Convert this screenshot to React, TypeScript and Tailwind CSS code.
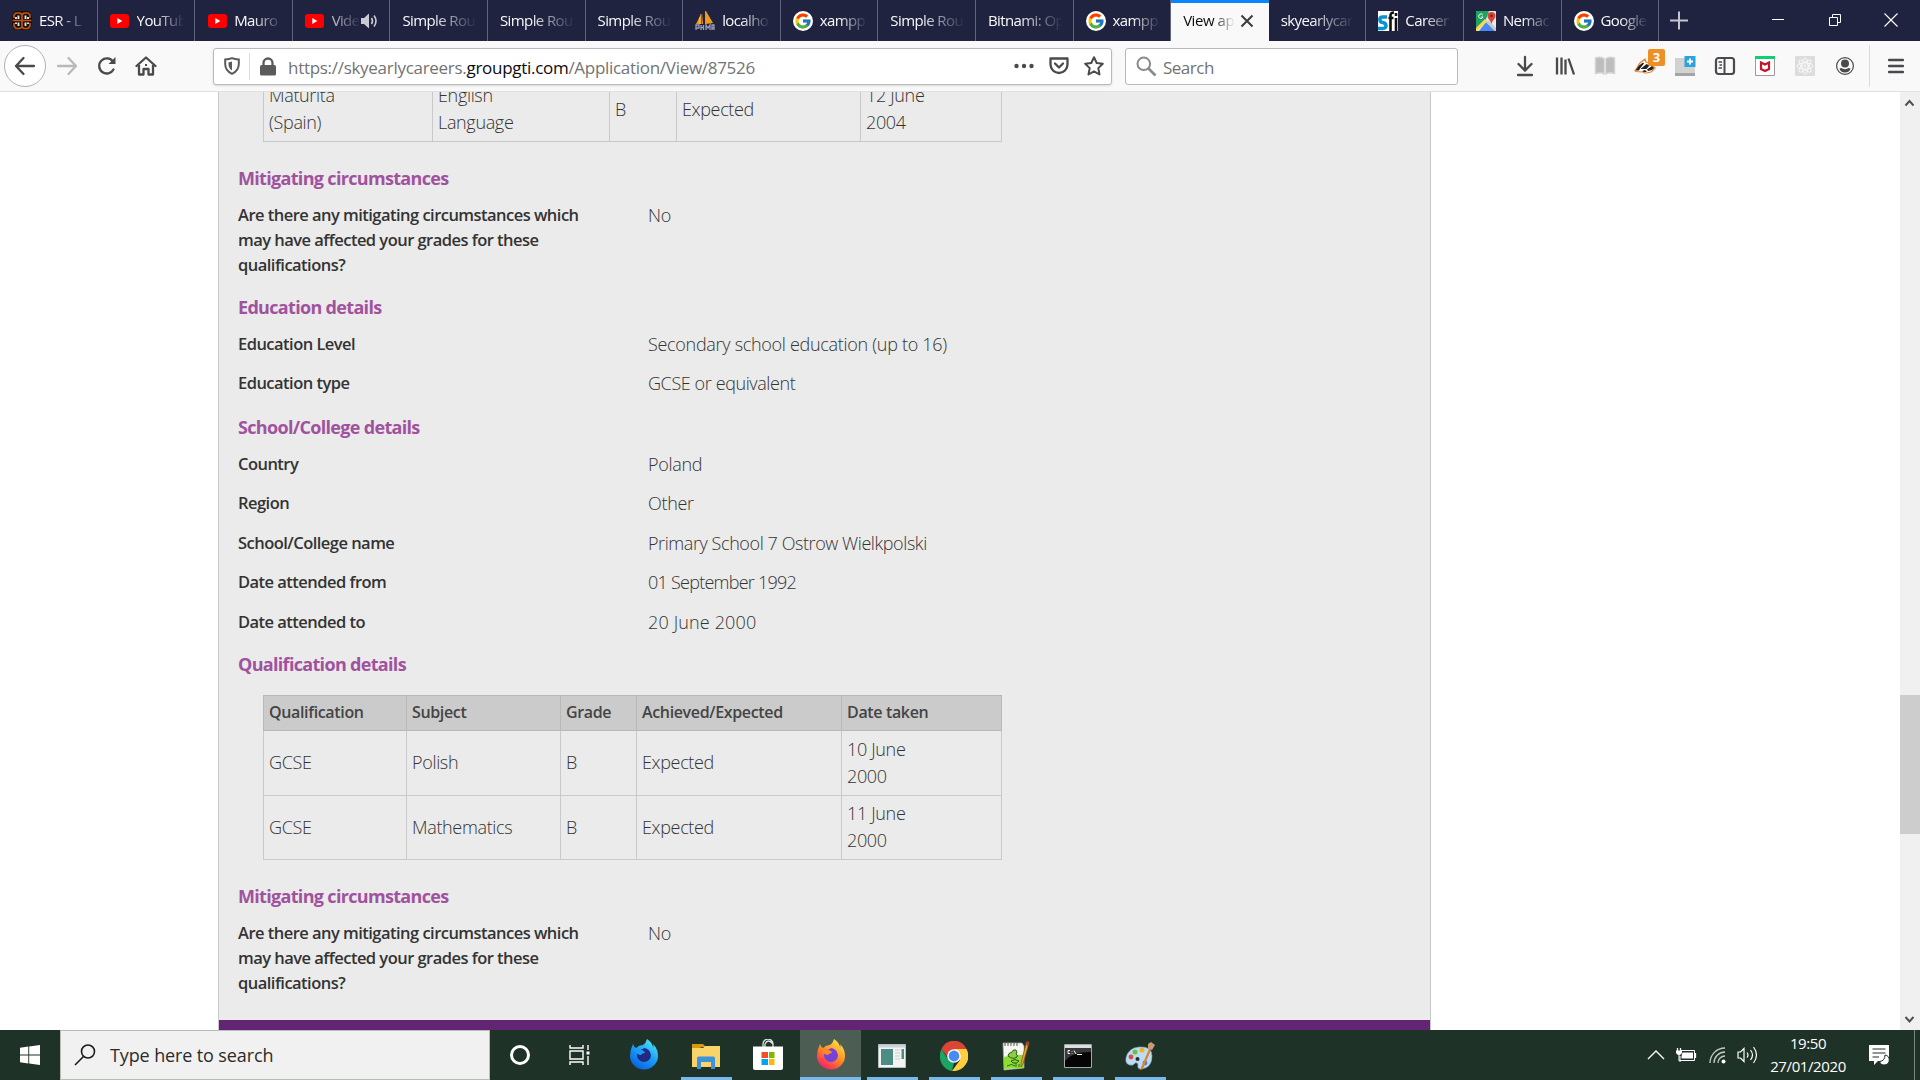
import React from 'react';
import { FcGoogle } from 'react-icons/fc';

const YouTube = () => (
  <svg width="19" height="14" viewBox="0 0 19 14" className="shrink-0">
    <rect width="19" height="14" rx="3" fill="#ff0000" />
    <path d="M7.3 4v6l5-3z" fill="#fff" />
  </svg>
);

const Google = () => (
  <span className="flex size-5 shrink-0 items-center justify-center rounded-full bg-white">
    <FcGoogle size={18} />
  </span>
);

const Esr = () => (
  <svg width="20" height="20" viewBox="0 0 20 20" className="shrink-0">
    <path d="M3 0h14l3 5v9l-3 5H3l-3-5V5z" fill="#17100c" />
    <path d="M2 7V4l2-2h4l2 1.500L12 2h4l2 2v3M2 12v3l2 2.500h4l2-1.500 2 1.500h4l2-2.500v-3M.5 9.500h19M10 3v13.500" stroke="#c4540f" strokeWidth="1.700" fill="none" />
    <path d="M4 8V6M6.500 8V4.500M13.500 8V4.500M16 8V6M4 11.500V13M6.500 11.500V15M13.500 11.500V15M16 11.500V13" stroke="#e6e2de" strokeWidth="1.900" />
  </svg>
);

const PhpMyAdmin = () => (
  <svg width="20" height="20" viewBox="0 0 20 20" className="shrink-0">
    <path d="M6 3 1 13h5zM8 2v11H7zM11 0l7 12-7 1z" fill="#f39a1e" />
    <path d="M6 3v10M10.500 0v13M4.500 6v7" stroke="#f8b75e" strokeWidth=".8" />
    <path d="M1 19v-5h3v3H1M6 14v5M8.500 14v5M6 16.500h3M11 19v-5l2 3 2-3v5M17 19v-5h2v5M17 17h2" fill="none" stroke="#9c9db3" strokeWidth="1.300" />
  </svg>
);

const Sfj = () => (
  <svg width="20" height="20" viewBox="0 0 20 20" className="shrink-0">
    <rect width="20" height="20" fill="#fff" />
    <path d="M9 6H4.500C1 6 1 11 4.500 11.500 9 12 9 17.500 5 17.500H0" fill="none" stroke="#0b93d1" strokeWidth="3.600" />
    <path d="M12.500 20V4.500q0-3 3.500-3M10.500 7h5M18 7v13M18 2v3" fill="none" stroke="#111" strokeWidth="2.600" />
  </svg>
);

const Maps = () => (
  <svg width="20" height="20" viewBox="0 0 20 20" className="shrink-0">
    <rect width="20" height="20" rx="1" fill="#e8eaed" />
    <path d="M0 0h13L9 11 0 20z" fill="#1ea362" />
    <path d="M3 20 10 11l9 9z" fill="#4a89f3" />
    <path d="M0 17 9 8l2 2L1.500 20H0z" fill="#ffd84a" />
    <path d="M12 9l8 8v3h-1l-9-9z" fill="#c5c8cc" />
    <path d="M15.500 1a4 4 0 0 1 4 4c0 3-3 4-4 8-1-4-4-5-4-8a4 4 0 0 1 4-4z" fill="#dc4437" />
    <circle cx="15.500" cy="4.800" r="1.400" fill="#7b231e" />
    <path d="M6.800 4a2.200 2.200 0 1 0 .2 2H5.200" fill="none" stroke="#fff" strokeWidth="1" />
  </svg>
);

type Tab = { label: string; icon?: React.ReactNode; kind?: 'active' | 'sound' };

const tabs: Tab[] = [
  { label: 'ESR - L', icon: <Esr /> },
  { label: 'YouTub', icon: <YouTube /> },
  { label: 'Mauro', icon: <YouTube /> },
  { label: 'Vide', icon: <YouTube />, kind: 'sound' },
  { label: 'Simple Rou' },
  { label: 'Simple Rou' },
  { label: 'Simple Rou' },
  { label: 'localho', icon: <PhpMyAdmin /> },
  { label: 'xampp', icon: <Google /> },
  { label: 'Simple Rou' },
  { label: 'Bitnami: Op' },
  { label: 'xampp', icon: <Google /> },
  { label: 'View ap', kind: 'active' },
  { label: 'skyearlycar' },
  { label: 'Career', icon: <Sfj /> },
  { label: 'Nemac', icon: <Maps /> },
  { label: 'Google', icon: <Google /> },
];

function TabItem({ tab }: { tab: Tab }) {
  if (tab.kind === 'active') {
    return (
      <div className="flex h-[41px] w-[97.6px] shrink-0 items-center border-t-[3px] border-[#0a84ff] bg-[#f9f9fa] pl-3 pr-[14px] text-[#0c0c0d]">
        <span className="mr-[5px] w-[52px] whitespace-nowrap pb-[4px] text-[15px] tracking-[-0.45px] [mask-image:linear-gradient(to_right,#000_58%,transparent_100%)]">
          {tab.label}
        </span>
        <svg width="14" height="14" viewBox="0 0 14 14" className="mb-[3px] shrink-0">
          <path d="m1.500 1.500 11 11m0-11-11 11" stroke="#3c3c3e" strokeWidth="2" />
        </svg>
      </div>
    );
  }
  return (
    <div className="flex h-[41px] w-[97.6px] shrink-0 items-center border-r border-[#62647c] pl-[12px] pr-[10px] text-[#f9f9fa]">
      {tab.icon && <span className="mr-[7px] flex w-5 shrink-0 justify-center">{tab.icon}</span>}
      <span className={tab.kind === 'sound'
        ? 'min-w-0 flex-1 whitespace-nowrap text-[15px] tracking-[-0.7px] opacity-70 [mask-image:linear-gradient(to_right,#000_10%,transparent_100%)]'
        : 'min-w-0 flex-1 whitespace-nowrap text-[15px] tracking-[-0.6px] [mask-image:linear-gradient(to_right,#000_40%,transparent_100%)]'}>
        {tab.label}
      </span>
      {tab.kind === 'sound' && (
        <svg width="18" height="16" viewBox="0 0 18 16" className="shrink-0">
          <path d="M0 5h3l5-4.500v15L3 11H0z" fill="#c9c9d2" />
          <path d="M10.500 5q2 3 0 6M13 2.500q4 5.500 0 11" fill="none" stroke="#c9c9d2" strokeWidth="1.600" />
        </svg>
      )}
    </div>
  );
}

function TabStrip() {
  return (
    <div className="flex h-[41px] items-center bg-[#202340]">
      {tabs.map((t, i) => <TabItem key={i} tab={t} />)}
      <svg width="40" height="41" viewBox="0 0 40 41" className="shrink-0">
        <path d="M20 11.500v18M11 20.500h18" stroke="#c4c5ce" strokeWidth="2" />
      </svg>
      <div className="ml-auto flex items-center">
        <svg width="57" height="41" viewBox="0 0 57 41"><path d="M23 19.500h12" stroke="#fff" /></svg>
        <svg width="57" height="41" viewBox="0 0 57 41">
          <path d="M23.500 17.500h8v8h-8zM26.500 17v-2.500h8v8H32" fill="none" stroke="#fff" />
        </svg>
        <svg width="57" height="41" viewBox="0 0 57 41"><path d="m21.500 13.500 13 13m0-13-13 13" stroke="#fff" strokeWidth="1.100" /></svg>
      </div>
    </div>
  );
}

const ToolIcon = ({ children }: { children: React.ReactNode }) => (
  <svg width="20" height="20" viewBox="0 0 20 20" fill="none" stroke="#4a4a4c" strokeWidth="2" className="shrink-0 overflow-visible">
    {children}
  </svg>
);

function NavBar() {
  return (
    <div className="flex h-[51px] items-center border-b border-[#e0e0e1] bg-[#f9f9fa]">
      <div className="ml-1 flex size-[42px] items-center justify-center rounded-full border border-[#b1b1b2] bg-white">
        <svg width="22" height="20" viewBox="0 0 22 20" fill="none" stroke="#4a4a4c" strokeWidth="2.300" strokeLinecap="round" strokeLinejoin="round">
          <path d="M20 10H2M9.500 2 2 10l7.500 8" />
        </svg>
      </div>
      <svg width="22" height="20" viewBox="0 0 22 20" fill="none" stroke="#b9b9ba" strokeWidth="2.300" strokeLinecap="round" strokeLinejoin="round" className="ml-[10px]">
        <path d="M2 10h18M12.500 2 20 10l-7.500 8" />
      </svg>
      <svg width="20" height="20" viewBox="0 0 20 20" fill="none" stroke="#4a4a4c" strokeWidth="2.300" strokeLinecap="round" className="ml-[19px]">
        <path d="M16.500 13.500A7.600 7.600 0 1 1 16 5.500" />
        <path d="M18.500 1v7h-7z" fill="#4a4a4c" stroke="none" />
      </svg>
      <svg width="22" height="20" viewBox="0 0 22 20" fill="none" stroke="#4a4a4c" strokeWidth="2.300" strokeLinecap="round" strokeLinejoin="round" className="ml-[18px]">
        <path d="M1.500 10 11 1.500l9.500 8.500M4 9v9.500h4.500V13h5v5.500H18V9" />
        <path d="M10 8h2v2h-2z" fill="#4a4a4c" stroke="none" />
      </svg>

      <div className="ml-[56px] flex h-[37px] w-[899px] items-center rounded-[3px] border border-[#b9b9ba] bg-white pl-[10px] pr-[7px] shadow-sm">
        <svg width="16" height="18" viewBox="0 0 16 18" fill="none" className="shrink-0">
          <path d="M8 1.200C10 2.100 12.500 2.400 14.800 2.400V7c0 5-2.800 8-6.800 9.800C4 15 1.200 12 1.200 7V2.400C3.500 2.400 6 2.100 8 1.200z" stroke="#5b5b5d" strokeWidth="2" />
          <path d="M8 4.500v9C5.500 12 4.500 10 4.500 7V5.300q2 0 3.500-.8z" fill="#5b5b5d" />
        </svg>
        <div className="ml-[9px] h-[27px] w-px bg-[#dcdcdd]" />
        <svg width="16" height="19" viewBox="0 0 16 19" className="ml-[10px] shrink-0">
          <rect y="8" width="16" height="10.500" rx="1.500" fill="#5b5b5d" />
          <path d="M3.500 9V6a4.500 4.500 0 0 1 9 0v3" fill="none" stroke="#5b5b5d" strokeWidth="2.300" />
        </svg>
        <div className="ml-[12px] whitespace-nowrap pt-[3px] text-[17px] tracking-[-0.29px] text-[#737374]">
          https://skyearlycareers.<span className="text-[#0c0c0d]">groupgti.com</span>/Application/View/87526
        </div>
        <div className="ml-auto flex items-center">
          <svg width="20" height="20" viewBox="0 0 20 20" fill="#4a4a4c" className="mr-[15px]">
            <circle cx="2.500" cy="10" r="2.200" /><circle cx="10" cy="10" r="2.200" /><circle cx="17.500" cy="10" r="2.200" />
          </svg>
          <svg width="20" height="18" viewBox="0 0 20 18" fill="none" stroke="#4a4a4c" strokeWidth="2.300" strokeLinecap="round" strokeLinejoin="round" className="mr-[15px]">
            <path d="M1.500 1.500h17v6a8.500 8.500 0 0 1-17 0z" /><path d="m6 6.500 4 4 4-4" />
          </svg>
          <svg width="20" height="20" viewBox="0 0 20 20" fill="none" stroke="#4a4a4c" strokeWidth="2" strokeLinejoin="round">
            <path d="m10 1.200 2.700 5.800 6.100.8-4.500 4.300 1.200 6.400-5.500-3.100-5.500 3.100 1.200-6.400L1.200 7.800 7.300 7z" />
          </svg>
        </div>
      </div>

      <div className="ml-[13px] flex h-[37px] w-[333px] items-center rounded-[3px] border border-[#b9b9ba] bg-white pl-[10px]">
        <svg width="21" height="21" viewBox="0 0 21 21" fill="none" stroke="#8a8a8b">
          <circle cx="7.800" cy="7.800" r="6.300" strokeWidth="2" /><path d="m12.500 12.500 7 7" strokeWidth="2.700" />
        </svg>
        <span className="ml-[6px] pt-[3px] text-[17px] tracking-[-0.5px] text-[#737374]">Search</span>
      </div>

      <div className="ml-auto flex items-center gap-5">
        <ToolIcon><path d="M10 1v13M3.500 8 10 14.500 16.500 8M3 19h14" strokeWidth="2.300" strokeLinecap="round" /></ToolIcon>
        <ToolIcon><path d="M2 1.500v17M6.500 1.500v17M10.500 3.500v15M13.500 2.500l5.500 16" strokeWidth="2.300" /></ToolIcon>
        <ToolIcon>
          <path d="M.5 2Q6 0 9.500 3v15Q6 16 .5 17.500zM19.500 2Q14 0 10.500 3v15q3.500-2 9-.5z" fill="#bdbdbd" stroke="#d3d3d3" strokeWidth="1.500" />
          <path d="M10 2.500v16" stroke="#ececec" strokeWidth="1" />
        </ToolIcon>
        <div className="relative flex">
          <ToolIcon>
            <path d="M0 14.500C2 13 3 9 5 7l5-4 1 3c4 1 7 4 9 6l-2 2c-1 2-4 3-8 3l-2-1-7-.500z" fill="#fff" stroke="#e98024" strokeWidth="1.200" />
            <path d="M.5 14.500 4 9.500l4-3 1 1-4 5-1 2zM5.500 13l6-5 3 1.500-3 3.500zM12 13.500l5-3.500 2 2-2 2-4 1zM7 15l3-1 2 2H9z" fill="#222" stroke="none" />
          </ToolIcon>
          <span className="absolute -top-[7px] left-[13px] flex h-[17px] w-[17px] items-center justify-center rounded-[2px] bg-[#ed9127] text-[13px] font-bold leading-none text-white">3</span>
        </div>
        <ToolIcon>
          <rect y="2" width="20" height="15" fill="#d2d2d3" stroke="none" /><rect y="17" width="20" height="3" fill="#a5a5a6" stroke="none" />
          <rect x="9.500" y="0" width="11" height="11" fill="#27a5e0" stroke="none" /><path d="M15 2.500v6M12 5.500h6" stroke="#fff" />
        </ToolIcon>
        <ToolIcon>
          <rect x="1" y="2" width="18" height="16" rx="2.500" strokeWidth="2.200" /><path d="M9.500 2v16" /><path d="M3.500 6H7M4.500 9H7M3.500 12H7" strokeWidth="1.300" />
        </ToolIcon>
        <ToolIcon>
          <path d="M.5.500h19v19H.5z" fill="#fff" stroke="#9b9b9c" strokeWidth="1" /><path d="M0 0h20v3H0z" fill="#0fd070" stroke="none" />
          <path d="M6 6.500 10 8.500l4-2v6.500l-4 2-4-2z" stroke="#c5172b" strokeWidth="2.200" />
        </ToolIcon>
        <ToolIcon>
          <rect width="20" height="20" rx="1" fill="#dcdcdd" stroke="none" />
          <g stroke="#f8f8f8" strokeWidth="1">
            <ellipse cx="10" cy="10" rx="8" ry="3.200" /><ellipse cx="10" cy="10" rx="8" ry="3.200" transform="rotate(45 10 10)" />
            <ellipse cx="10" cy="10" rx="8" ry="3.200" transform="rotate(90 10 10)" /><ellipse cx="10" cy="10" rx="8" ry="3.200" transform="rotate(135 10 10)" />
            <circle cx="10" cy="10" r="1.200" />
          </g>
        </ToolIcon>
        <ToolIcon>
          <circle cx="10" cy="10" r="8.400" strokeWidth="1.200" />
          <circle cx="10" cy="7.500" r="4" fill="#4a4a4c" stroke="none" /><path d="M4.500 12.500q1.500-.8 2.500-.3 3 2 6 0 1-.5 2.500.3-1 4-5.500 4t-5.500-4z" fill="#4a4a4c" stroke="none" />
        </ToolIcon>
      </div>
      <div className="ml-[14px] h-[42px] w-px bg-[#dcdcdd]" />
      <svg width="16" height="16" viewBox="0 0 16 16" className="mr-4 ml-[18px]"><path d="M1 2h14M1 8h14M1 14h14" stroke="#4a4a4c" strokeWidth="2.500" strokeLinecap="round" /></svg>
    </div>
  );
}

const Heading = ({ children }: { children: React.ReactNode }) => (
  <h3 className="h-6 text-[18px] font-bold leading-6 tracking-[-0.68px] text-[#a1529f]">{children}</h3>
);

const Field = ({ label, value, tracking = 'tracking-[-0.3px]' }: { label: string; value: string; tracking?: string }) => (
  <div className="flex h-[25px]">
    <div className="w-[410px] shrink-0 pr-[60px] text-[16.5px] font-semibold leading-[25px] tracking-[-0.53px] text-[#333]">{label}</div>
    <div className={`pt-px text-[18px] font-[350] leading-[25px] text-[#333] ${tracking}`}>{value}</div>
  </div>
);

const Mitigating = () => (
  <section>
    <Heading>Mitigating circumstances</Heading>
    <div className="mt-3 h-[75px]">
      <Field label="Are there any mitigating circumstances which may have affected your grades for these qualifications?" value="No" />
    </div>
  </section>
);

const Fields = ({ title, rows }: { title: string; rows: [string, string, string?][] }) => (
  <section>
    <Heading>{title}</Heading>
    <div className="mt-3 flex flex-col gap-[14.400px]">
      {rows.map(([l, v, t]) => <Field key={l} label={l} value={v} tracking={t} />)}
    </div>
  </section>
);

const Row = ({ cols, cells, height = 'h-[65px]' }: { cols: string; cells: string[]; height?: string }) => (
  <div className={`grid ${cols} ${height} shrink-0 border-b border-l border-[#c9c9c9]`}>
    {cells.map((c, i) => (
      <div key={i} className="flex items-center whitespace-pre-line border-r border-[#c9c9c9] pl-[5px] text-[18px] font-[350] leading-[27px] tracking-[-0.34px] text-[#333]">
        {c}
      </div>
    ))}
  </div>
);

const topCols = 'grid-cols-[169px_177px_67px_184px_141px]';
const mainCols = 'grid-cols-[143px_154px_76px_205px_160px]';

function Page() {
  return (
    <div className="flex h-[938px] bg-white">
      <main className="ml-[218px] flex w-[1213px] flex-col border-x border-[#c8c8c8] bg-[#ebebeb]">
        <div className="flex-1 pl-[19px]">
          <div className="ml-[25px] flex h-[50px] w-[739px] flex-col justify-end overflow-hidden">
            <Row cols={topCols} cells={['Maturita\n(Spain)', 'English\nLanguage', 'B', 'Expected', '12 June\n2004']} />
          </div>
          <div className="mt-[24px]"><Mitigating /></div>
          <div className="mt-[18px]">
            <Fields title="Education details" rows={[
              ['Education Level', 'Secondary school education (up to 16)'],
              ['Education type', 'GCSE or equivalent', 'tracking-[-0.4px]'],
            ]} />
          </div>
          <div className="mt-[19.600px]">
            <Fields title="School/College details" rows={[
              ['Country', 'Poland'],
              ['Region', 'Other'],
              ['School/College name', 'Primary School 7 Ostrow Wielkpolski', 'tracking-[-0.42px]'],
              ['Date attended from', '01 September 1992', 'tracking-[-0.75px]'],
              ['Date attended to', '20 June 2000', 'tracking-[0.15px]'],
            ]} />
          </div>
          <div className="mt-[18.400px]"><Heading>Qualification details</Heading></div>
          <div className="mt-[19px] ml-[25px] w-[739px]">
            <div className={`grid ${mainCols} h-[36px] border-y border-l border-[#b8b8b8] bg-[#cbcbcb]`}>
              {['Qualification', 'Subject', 'Grade', 'Achieved/Expected', 'Date taken'].map((h) => (
                <div key={h} className="flex items-center border-r border-[#b8b8b8] pb-px pl-[5px] text-[16px] font-semibold tracking-[-0.35px] text-[#444]">{h}</div>
              ))}
            </div>
            <Row cols={mainCols} cells={['GCSE', 'Polish', 'B', 'Expected', '10 June\n2000']} />
            <Row cols={mainCols} height="h-[64px]" cells={['GCSE', 'Mathematics', 'B', 'Expected', '11 June\n2000']} />
          </div>
          <div className="mt-[24px]"><Mitigating /></div>
        </div>
        <div className="h-[10px] bg-[#622573]" />
      </main>
      <div className="ml-auto flex w-5 flex-col items-center bg-[#f0f0f0]">
        <svg width="20" height="22" viewBox="0 0 20 22"><path d="m5.500 13.500 4-4.500 4 4.500" fill="none" stroke="#505050" strokeWidth="2" /></svg>
        <div className="mt-[581px] h-[139px] w-full bg-[#cdcdcd]" />
        <svg width="20" height="22" viewBox="0 0 20 22" className="mt-auto"><path d="m5.500 9 4 4.500 4-4.500" fill="none" stroke="#505050" strokeWidth="2" /></svg>
      </div>
    </div>
  );
}

const fox = (id: string, a: string, b: string, c: string, core: string) => (
  <svg width="30" height="32" viewBox="0 0 30 32">
    <defs>
      <linearGradient id={id} x1=".8" y1="0" x2=".2" y2="1"><stop offset="0" stopColor={a} /><stop offset=".5" stopColor={b} /><stop offset="1" stopColor={c} /></linearGradient>
    </defs>
    <path d="M4 6q1 3 3 4 3-3 7-3 3-2 4-6 6 4 6 9 1-2 0-4 5 5 5 12a14 13.500 0 0 1-28 0q0-6 3-12z" fill={`url(#${id})`} />
    <path d="M8 12q5 0 7-2 6 1 7 7a7 7 0 0 1-14 0q0-1 1-2z" fill={core} />
    <path d="M5 11q4-2 8 1 3 1 3 3-3 0-4 2-4 0-7-6z" fill={b} />
  </svg>
);

const apps: { el: React.ReactNode; state?: 'open' | 'active' }[] = [
  { el: fox('foxdev', '#4fe9f5', '#1a9bf5', '#0a5be0', '#1f2a80') },
  { state: 'open', el: (
    <svg width="28" height="26" viewBox="0 0 28 26">
      <path d="M0 1h11l3 3h-3L0 7z" fill="#d9980d" /><path d="M0 5h11l2-2h15v21H0z" fill="#fbd469" />
      <path d="M5 26V15q0-1.500 1.500-1.500h15Q23 13.500 23 15v11h-4v-7H9v7z" fill="#3d94dc" />
    </svg>
  ) },
  { el: (
    <svg width="30" height="31" viewBox="0 0 30 31">
      <path d="M10 8V5a5 5 0 0 1 10 0v3M12 8V5q3-6 8 0" fill="none" stroke="#dfe4e0" strokeWidth="1.300" /><path d="M0 7.500h30V29q0 2-2 2H2q-2 0-2-2z" fill="#fff" />
      <path d="M8.500 13H15v6H8.500z" fill="#f25022" /><path d="M16 13h5.500v6H16z" fill="#7fba00" /><path d="M8.500 20H15v6H8.500z" fill="#00a4ef" /><path d="M16 20h5.500v6H16z" fill="#ffb900" />
    </svg>
  ) },
  { state: 'active', el: fox('foxmain', '#ffe94a', '#ff8a24', '#f5156c', '#7542d8') },
  { state: 'open', el: (
    <svg width="28" height="24" viewBox="0 0 28 24">
      <path d="M.5.500h27v23H.5z" fill="#f4f4f4" stroke="#b9bcc4" /><path d="M1 1h26v2.500H1z" fill="#cdd0da" />
      <path d="M3 5h12v16H3z" fill="#4b8d83" /><path d="M17 6h5M17 9h5M17 12h5M17 15h5" stroke="#ccc" /><path d="M23.500 5H26v10h-2.500z" fill="#4b8d83" />
    </svg>
  ) },
  { state: 'open', el: (
    <svg width="28" height="30" viewBox="0 0 28 30">
      <path d="M1.500 8A14 15 0 0 1 26.500 8H14L9 18z" fill="#db4437" /><path d="M1.500 8 8 18.500l6 3L12 30A14 15 0 0 1 1.500 8z" fill="#1da462" />
      <path d="M14 8h12.500A15 15 0 0 1 12 30l8-11z" fill="#ffcd40" /><circle cx="14" cy="15" r="6.800" fill="#fff" /><circle cx="14" cy="15" r="5.400" fill="#4a8af4" />
    </svg>
  ) },
  { state: 'open', el: (
    <svg width="28" height="30" viewBox="0 0 28 30">
      <path d="M1 2h19l2 3v22L2 29z" fill="#f6f7f2" stroke="#a9a9a9" strokeWidth=".7" /><path d="M2 16q9-3 20-2v13L2 28z" fill="#8fdc35" />
      <path d="M3 2v3M6 2v3M9 2v3M12 2v3M15 2v3" stroke="#555" />
      <path d="M6 15q0-3 4-4 1-3 4-2 2 2 0 4 2 1 1 3-4 3-9-1zM9 20q4-3 8 0-2 3-6 2z" fill="#8ccf45" stroke="#234b13" strokeWidth=".9" />
      <path d="M5 25q5-3 8 0M14 22v4M17 23v3" stroke="#2c6b14" fill="none" />
      <path d="M27 2 21 23l-2 3v-4L24.500 1z" fill="#e5a52b" stroke="#8a4a17" strokeWidth=".7" /><path d="m27.500 1-1.500 4-2-1L25.500 0z" fill="#b7323b" />
    </svg>
  ) },
  { state: 'open', el: (
    <svg width="28" height="24" viewBox="0 0 28 24">
      <path d="M.5.500h27v23H.5z" fill="#050505" stroke="#a3a7ab" /><path d="M1 1h26v3H1z" fill="#dcdee2" /><path d="M1 4h26v4Q8 8 1 17z" fill="#39393b" />
      <path d="M6 6.500H4v3h2M8 7v.6M8 9v.6M10 6.500l2 3.500M13 10.500h5" fill="none" stroke="#f5f5f5" />
    </svg>
  ) },
  { state: 'open', el: (
    <svg width="30" height="30" viewBox="0 0 30 30">
      <path d="M14 6q13-1 13 9 0 12-11 13-4 0-3-4 0-3-3-2-2 3-5 2-5-1-4-7Q3 7 14 6z" fill="#bcdcf0" stroke="#7fa9c8" strokeWidth=".6" />
      <circle cx="6" cy="16" r="2.400" fill="#de4a3f" /><circle cx="10" cy="11" r="2.500" fill="#6fbf3b" /><circle cx="17" cy="9" r="2.500" fill="#f0b429" /><circle cx="20" cy="22" r="2.400" fill="#4a7fd0" /><circle cx="12.500" cy="18" r="2" fill="#1f3227" />
      <path d="m15 29 9-21 2 1-8 19z" fill="#d8853a" /><path d="m23 8 0-5 3-2 4 3-3 5z" fill="#c79b74" />
    </svg>
  ) },
];

const appClass = {
  idle: 'flex h-[50px] w-[60px] items-center justify-center pb-[2px]',
  open: 'flex h-[50px] w-[60px] items-center justify-center pt-px',
  active: 'flex h-[50px] w-[61px] items-center justify-center border-b-[3px] border-[#76b9ed] bg-[#4c5d54] pt-px',
};

function Taskbar() {
  return (
    <div className="flex h-[50px] bg-[#1f3227] font-['Open_Sans',sans-serif]">
      <div className="flex w-[60px] items-center justify-center">
        <svg width="20" height="20" viewBox="0 0 20 20" fill="#fff"><path d="M0 2.800 8.300 1.600v7.900H0zM9.200 1.500 20 0v9.500H9.200zM0 10.500h8.300v7.900L0 17.200zM9.200 10.500H20V20L9.200 18.500z" /></svg>
      </div>
      <div className="flex w-[430px] items-center border border-[#b9bdba] bg-[#f1f1f1]">
        <svg width="22" height="22" viewBox="0 0 22 22" fill="none" stroke="#1b1b1b" strokeWidth="1.600" className="ml-[13px]"><circle cx="14" cy="7.500" r="6.500" /><path d="M9.500 12.500 1 21" /></svg>
        <span className="ml-[14px] whitespace-nowrap text-[18px] tracking-[-0.12px] text-[#2b2b2b]">Type here to search</span>
      </div>
      <div className="flex w-[60px] items-center justify-center">
        <div className="size-[20px] rounded-full border-[3px] border-white" />
      </div>
      <div className="mr-[4px] flex w-[60px] items-center justify-center">
        <svg width="22" height="20" viewBox="0 0 22 20" fill="none" stroke="#fff" strokeWidth="1.400"><path d="M1 0v3h13V0M1 6h13v8H1zM1 20v-3h13v3M19 0v5M19 11v9" /><path d="M17.500 6.500h3v3h-3z" fill="#fff" stroke="none" /></svg>
      </div>
      <div className="flex gap-[2px]">
        {apps.map((a, i) => (
          <div key={i} className={a.state === 'active' ? '-mr-px' : ''}>
            <div className={appClass[a.state ?? 'idle']}>{a.el}</div>
            {a.state === 'open' && <div className="relative -mt-[3px] ml-[5px] h-[3px] w-[51px] bg-[#76b9ed]" />}
          </div>
        ))}
      </div>
      <div className="ml-auto flex items-center text-white">
        <svg width="18" height="10" viewBox="0 0 18 10" fill="none" stroke="#fff" strokeWidth="1.400"><path d="m1 9 8-8 8 8" /></svg>
        <svg width="21" height="14" viewBox="0 0 21 14" className="ml-[11px]"><path d="M5 2.500h13.500v10H4V8" fill="none" stroke="#fff" /><path d="M6.500 4.500H17v6H5.500V8z" fill="#fff" /><path d="M19.500 5v5M1.500 0v3M4.500 0v3" stroke="#fff" strokeWidth="1.300" /><path d="M0 2.500h6V5Q5 7 3 7T0 5z" fill="#fff" /><path d="M3 6v7h2" stroke="#fff" fill="none" /></svg>
        <svg width="17" height="17" viewBox="0 0 17 17" fill="none" stroke="#c5cbc7" strokeWidth="1.300" className="ml-[12px]"><path d="M1 16A15 15 0 0 1 16 1M5 16A11 11 0 0 1 16 5M9 16a7 7 0 0 1 7-7" /><circle cx="14.500" cy="14.500" r="2" fill="#fff" stroke="none" /></svg>
        <svg width="21" height="18" viewBox="0 0 21 18" fill="none" stroke="#fff" strokeWidth="1.200" className="ml-[11px]"><path d="M1 6h2.500L7 2.500v13L3.500 12H1zM10 6.500q2 2.500 0 5M13.500 4q4 5 0 10M16.500 1q6 8 0 16" /></svg>
        <div className="ml-[10px] w-[80px] whitespace-nowrap text-center text-[15px] leading-[23px] tracking-[-0.4px]"><div>19:50</div><div>27/01/2020</div></div>
        <svg width="21" height="20" viewBox="0 0 21 20" className="ml-[21px]"><path d="M0 0h20v16H9l-4 4v-4H0z" fill="#fff" /><path d="M3.500 4h13M3.500 8h13M3.500 12H10" stroke="#1f3227" /><path d="M16 10a5 5 0 1 1-5.500 6.500Q16 16 16 10z" fill="#fff" stroke="#1f3227" /></svg>
        <div className="ml-[24px] mr-[5px] h-[50px] w-px bg-[#7b877f]" />
      </div>
    </div>
  );
}

export default function App() {
  return (
    <div className="h-[1080px] w-[1920px] overflow-hidden bg-white font-['Open_Sans','Noto_Sans',sans-serif]">
      <TabStrip />
      <NavBar />
      <Page />
      <Taskbar />
    </div>
  );
}
